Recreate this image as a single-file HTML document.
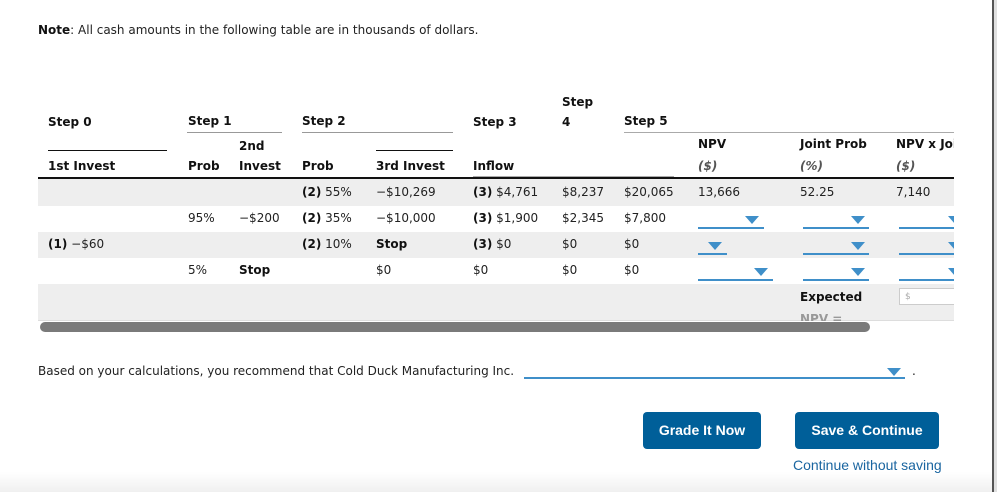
<!DOCTYPE html>
<html><head><style>
body{margin:0;width:997px;height:492px;background:#fff;position:relative;overflow:hidden;font-family:"DejaVu Sans","Liberation Sans",sans-serif;font-size:12px;color:#222}
.a{position:absolute;white-space:nowrap}
b{font-weight:bold;color:#111}
.row{position:absolute;left:38px;width:916px}
.ln{position:absolute;height:1px}
.dd{position:absolute;height:2px;background:#3f8fc9}
.tri{position:absolute;width:0;height:0;border-left:7px solid transparent;border-right:7px solid transparent;border-top:8px solid #3f8fc9}
.btn{position:absolute;background:#005f99;color:#fff;font-family:"Liberation Sans",sans-serif;font-weight:bold;font-size:14px;border-radius:4px;text-align:center;line-height:37px}
</style></head><body>
<div style="position:absolute;left:0;top:472px;width:993px;height:20px;background:linear-gradient(#fff,#f0f0f0)"></div>
<div class="a" style="left:38px;top:23px"><b>Note</b>: All cash amounts in the following table are in thousands of dollars.</div>

<div class="row" style="top:178px;height:28px;background:#eee"></div>
<div class="row" style="top:232px;height:26px;background:#eee"></div>
<div class="row" style="top:284px;height:37px;background:#eee"></div>
<div class="ln" style="left:38px;top:177px;width:916px;height:2px;background:#111"></div>
<div class="ln" style="left:38px;top:320px;width:916px;background:#ddd"></div>

<div class="a" style="left:48px;top:115px"><b>Step 0</b></div>
<div class="ln" style="left:48px;top:150px;width:119px;background:#111"></div>
<div class="a" style="left:48px;top:159px"><b>1st Invest</b></div>
<div class="a" style="left:188px;top:114px"><b>Step 1</b></div>
<div class="ln" style="left:187px;top:132px;width:95px;background:#999"></div>
<div class="a" style="left:239px;top:139px"><b>2nd</b></div>
<div class="a" style="left:188px;top:159px"><b>Prob</b></div>
<div class="a" style="left:239px;top:159px"><b>Invest</b></div>
<div class="a" style="left:302px;top:114px"><b>Step 2</b></div>
<div class="ln" style="left:302px;top:132px;width:151px;background:#999"></div>
<div class="ln" style="left:376px;top:150px;width:77px;background:#111"></div>
<div class="a" style="left:302px;top:159px"><b>Prob</b></div>
<div class="a" style="left:376px;top:159px"><b>3rd Invest</b></div>
<div class="a" style="left:473px;top:115px"><b>Step 3</b></div>
<div class="a" style="left:473px;top:159px"><b>Inflow</b></div>
<div class="ln" style="left:473px;top:176px;width:201px;background:#aaa"></div>
<div class="a" style="left:562px;top:95px"><b>Step</b></div>
<div class="a" style="left:562px;top:115px"><b>4</b></div>
<div class="a" style="left:624px;top:114px"><b>Step 5</b></div>
<div class="ln" style="left:624px;top:132px;width:330px;background:#aaa"></div>
<div class="a" style="left:698px;top:137px"><b>NPV</b></div>
<div class="a" style="left:698px;top:159px;color:#555;font-style:italic;font-weight:bold">($)</div>
<div class="a" style="left:800px;top:137px"><b>Joint Prob</b></div>
<div class="a" style="left:800px;top:159px;color:#555;font-style:italic;font-weight:bold">(%)</div>
<div class="a" style="left:896px;top:137px;width:58px;overflow:hidden"><b>NPV x Joint</b></div>
<div class="a" style="left:896px;top:159px;color:#555;font-style:italic;font-weight:bold">($)</div>

<div class="a" style="left:302px;top:185px"><b>(2)</b> 55%</div>
<div class="a" style="left:376px;top:185px">&minus;$10,269</div>
<div class="a" style="left:473px;top:185px"><b>(3)</b> $4,761</div>
<div class="a" style="left:562px;top:185px">$8,237</div>
<div class="a" style="left:624px;top:185px">$20,065</div>
<div class="a" style="left:698px;top:185px">13,666</div>
<div class="a" style="left:800px;top:185px">52.25</div>
<div class="a" style="left:896px;top:185px">7,140</div>

<div class="a" style="left:188px;top:211px">95%</div>
<div class="a" style="left:239px;top:211px">&minus;$200</div>
<div class="a" style="left:302px;top:211px"><b>(2)</b> 35%</div>
<div class="a" style="left:376px;top:211px">&minus;$10,000</div>
<div class="a" style="left:473px;top:211px"><b>(3)</b> $1,900</div>
<div class="a" style="left:562px;top:211px">$2,345</div>
<div class="a" style="left:624px;top:211px">$7,800</div>

<div class="a" style="left:48px;top:237px"><b>(1)</b> &minus;$60</div>
<div class="a" style="left:302px;top:237px"><b>(2)</b> 10%</div>
<div class="a" style="left:376px;top:237px"><b>Stop</b></div>
<div class="a" style="left:473px;top:237px"><b>(3)</b> $0</div>
<div class="a" style="left:562px;top:237px">$0</div>
<div class="a" style="left:624px;top:237px">$0</div>

<div class="a" style="left:188px;top:263px">5%</div>
<div class="a" style="left:239px;top:263px"><b>Stop</b></div>
<div class="a" style="left:376px;top:263px">$0</div>
<div class="a" style="left:473px;top:263px">$0</div>
<div class="a" style="left:562px;top:263px">$0</div>
<div class="a" style="left:624px;top:263px">$0</div>

<div class="dd" style="left:698px;top:227px;width:66px"></div><div class="tri" style="left:745px;top:216px"></div>
<div class="dd" style="left:698px;top:253px;width:29px"></div><div class="tri" style="left:708px;top:242px"></div>
<div class="dd" style="left:698px;top:279px;width:75px"></div><div class="tri" style="left:754px;top:268px"></div>
<div class="dd" style="left:803px;top:227px;width:66px"></div><div class="tri" style="left:851px;top:216px"></div>
<div class="dd" style="left:803px;top:253px;width:66px"></div><div class="tri" style="left:851px;top:242px"></div>
<div class="dd" style="left:803px;top:279px;width:66px"></div><div class="tri" style="left:851px;top:268px"></div>
<div class="dd" style="left:899px;top:227px;width:55px"></div>
<div class="dd" style="left:899px;top:253px;width:55px"></div>
<div class="dd" style="left:899px;top:279px;width:55px"></div>
<div style="position:absolute;left:948px;top:216px;width:6px;height:8px;overflow:hidden"><div class="tri" style="left:0;top:0"></div></div>
<div style="position:absolute;left:948px;top:242px;width:6px;height:8px;overflow:hidden"><div class="tri" style="left:0;top:0"></div></div>
<div style="position:absolute;left:948px;top:268px;width:6px;height:8px;overflow:hidden"><div class="tri" style="left:0;top:0"></div></div>

<div class="a" style="left:800px;top:290px"><b>Expected</b></div>
<div class="a" style="left:800px;top:312px;height:9px;overflow:hidden;color:#999;font-weight:bold">NPV =</div>
<div style="position:absolute;left:899px;top:288px;width:55px;height:17px;border:1px solid #ccc;border-right:none;background:#fff;box-sizing:border-box;font-size:9px;color:#aaa;padding:3px 0 0 5px">$</div>
<div style="position:absolute;left:40px;top:322px;width:830px;height:10px;border-radius:5px;background:#7a7a7a"></div>

<div class="a" style="left:38px;top:364px">Based on your calculations, you recommend that Cold Duck Manufacturing Inc.</div>
<div class="dd" style="left:524px;top:377px;width:381px"></div><div class="tri" style="left:887px;top:368px"></div>
<div class="a" style="left:912px;top:364px">.</div>

<div class="btn" style="left:643px;top:412px;width:118px">Grade It Now</div>
<div class="btn" style="left:795px;top:412px;width:144px">Save &amp; Continue</div>
<div class="a" style="left:793px;top:456px;font-family:'Liberation Sans',sans-serif;font-size:14px;line-height:18px;color:#1a65a0">Continue without saving</div>

<div style="position:absolute;left:992px;top:0;width:2px;height:492px;background:#555"></div>
<div style="position:absolute;left:994px;top:0;width:3px;height:492px;background:#e0e0e0"></div>
</body></html>
